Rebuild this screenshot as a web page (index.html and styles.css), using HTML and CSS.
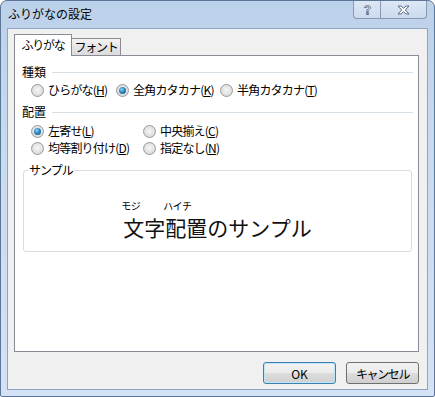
FILE: index.html
```html
<!DOCTYPE html>
<html lang="ja">
<head>
    <meta charset="UTF-8">
    <title>ふりがなの設定</title>
    <link rel="stylesheet" href="styles.css">
</head>
<body>

    <div class="window">
        <div class="titlebar">
            <span class="title">ふりがなの設定</span>
            <div class="caption">
                <span class="cap-btn help">
                    <svg width="9" height="12" viewBox="0 0 9 12">
                        <path d="M1.5 3.5 C1.5 1.2 7.5 1 7.5 3.6 C7.5 5.3 5.3 5.6 5.3 7.3 L3.7 7.3 C3.7 5.2 5.9 4.9 5.9 3.7 C5.9 2.4 3.2 2.5 3.2 3.7 Z" fill="#fff" stroke="#4f5f77" stroke-width="0.9"/>
                        <rect x="3.7" y="8.6" width="1.6" height="1.8" fill="#fff" stroke="#4f5f77" stroke-width="0.9"/>
                    </svg>
                </span>
                <span class="cap-btn close">
                    <svg width="13" height="10" viewBox="0 0 13 10">
                        <path d="M1 1 L4 1 L6.5 3.2 L9 1 L12 1 L8.3 5 L12 9 L9 9 L6.5 6.8 L4 9 L1 9 L4.7 5 Z" fill="#fff" stroke="#4f5f77" stroke-width="0.9" stroke-linejoin="round"/>
                    </svg>
                </span>
            </div>
        </div>

        <div class="client">
            <div class="tabs">
                <span class="tab active">ふりがな</span>
                <span class="tab">フォント</span>
            </div>

            <div class="panel">
                <div class="group-head">種類</div>
                <div class="options kind">
                    <label class="option"><span class="radio"></span>ひらがな(<u>H</u>)</label>
                    <label class="option"><span class="radio checked"></span>全角カタカナ(<u>K</u>)</label>
                    <label class="option"><span class="radio"></span>半角カタカナ(<u>T</u>)</label>
                </div>

                <div class="group-head">配置</div>
                <div class="options align">
                    <label class="option"><span class="radio checked"></span>左寄せ(<u>L</u>)</label>
                    <label class="option"><span class="radio"></span>中央揃え(<u>C</u>)</label>
                    <label class="option"><span class="radio"></span>均等割り付け(<u>D</u>)</label>
                    <label class="option"><span class="radio"></span>指定なし(<u>N</u>)</label>
                </div>

                <fieldset class="sample">
                    <legend>サンプル</legend>
                    <div class="sample-text">
                        <span class="word"><span class="rt">モジ</span><span class="rb">文字</span></span>
                        <span class="word"><span class="rt">ハイチ</span><span class="rb">配置</span></span>
                        <span class="word"><span class="rb">のサンプル</span></span>
                    </div>
                </fieldset>
            </div>

            <div class="buttons">
                <button class="default">OK</button>
                <button>キャンセル</button>
            </div>
        </div>
    </div>

</body>
</html>
```

FILE: styles.css
```css
body {
    margin: 0;
    font-family: "Noto Sans CJK JP", "Liberation Sans", sans-serif;
    font-size: 12px;
    color: #000;
    background: #fff;
}
.window {
    width: 435px;
    height: 397px;
    box-sizing: border-box;
    display: flex;
    flex-direction: column;
    padding: 0 6px 6px 6px;
    border: 1px solid #5d7596;
    border-radius: 7px 7px 2px 2px;
    background: linear-gradient(#bcd1ea, #c9dbf0 40%, #d3e2f4);
}
.titlebar {
    height: 27px;
    display: flex;
    justify-content: space-between;
    align-items: flex-start;
}
.title {
    margin: 5px 0 0 1px;
    font-size: 12px;
    line-height: 16px;
}
.caption {
    display: flex;
    margin-right: 1px;
}
.cap-btn {
    height: 18px;
    display: flex;
    align-items: center;
    justify-content: center;
    box-sizing: border-box;
    border: 1px solid #8799b3;
    border-top: none;
    background: linear-gradient(#dde8f5, #cbdaee);
}
.cap-btn.help {
    width: 28px;
    border-radius: 0 0 0 4px;
}
.cap-btn.close {
    width: 46px;
    border-left: none;
    border-radius: 0 0 4px 0;
}
.client {
    flex: 1;
    display: flex;
    flex-direction: column;
    padding: 5px 8px 5px 6px;
    background: #f0f0f0;
    border: 1px solid #8fa4c0;
}
.tabs {
    display: flex;
    align-items: flex-end;
    height: 21px;
}
.tab {
    box-sizing: border-box;
    width: 50px;
    height: 17px;
    line-height: 15px;
    text-align: center;
    letter-spacing: -1.2px;
    border: 1px solid #898c95;
    border-bottom: none;
    background: linear-gradient(#f3f3f3, #e5e5e5 50%, #dcdcdc);
    margin-left: -1px;
}
.tab.active {
    width: 58px;
    height: 22px;
    line-height: 20px;
    margin-left: 0;
    margin-bottom: -1px;
    background: #fff;
    position: relative;
    z-index: 1;
}
.panel {
    flex: 1;
    background: #fff;
    border: 1px solid #898c95;
    padding: 8px 5px 0 7px;
    display: flex;
    flex-direction: column;
}
.group-head {
    display: flex;
    align-items: center;
    line-height: 16px;
}
.group-head::after {
    content: "";
    flex: 1;
    margin-left: 6px;
    border-top: 1px solid #d5dfe5;
}
.options {
    display: grid;
    margin-left: 9px;
    line-height: 16px;
    letter-spacing: -0.8px;
}
.options.kind {
    grid-template-columns: 85px 104px auto;
    margin-top: 2px;
    margin-bottom: 6px;
}
.options.align {
    grid-template-columns: 112px auto;
    row-gap: 1px;
    margin-top: 3px;
}
.option {
    display: flex;
    align-items: center;
    white-space: nowrap;
}
.radio {
    flex: none;
    width: 13px;
    height: 13px;
    box-sizing: border-box;
    margin-right: 4px;
    border-radius: 50%;
    border: 1px solid #9a9a9a;
    background: radial-gradient(circle at 50% 45%, #f6f6f6 0, #e2e2e2 55%, #cdcdcd 100%);
    display: flex;
    align-items: center;
    justify-content: center;
}
.radio.checked::after {
    content: "";
    width: 7px;
    height: 7px;
    border-radius: 50%;
    background: radial-gradient(circle at 40% 35%, #8fd8f7 0, #2f86c3 45%, #0f4a7c 100%);
}
.sample {
    margin: 6px 1px 0 1px;
    padding: 0 4px;
    height: 90px;
    box-sizing: border-box;
    border: 1px solid #dcdcdc;
    border-radius: 3px;
}
.sample legend {
    padding: 0 1px;
    line-height: 16px;
    letter-spacing: -1px;
}
.sample-text {
    display: flex;
    justify-content: center;
    align-items: flex-end;
    margin-top: 20px;
}
.word {
    display: flex;
    flex-direction: column;
    align-items: flex-start;
}
.rt {
    font-size: 10px;
    line-height: 15px;
    margin-left: -2px;
    margin-bottom: -1px;
    letter-spacing: -0.5px;
}
.rb {
    font-size: 21px;
    line-height: 30px;
    color: #111;
}
.buttons {
    display: flex;
    justify-content: flex-end;
    gap: 10px;
    margin-top: 10px;
}
button {
    width: 73px;
    height: 22px;
    padding: 0;
    font-family: inherit;
    font-size: 12px;
    letter-spacing: -1.4px;
    color: #000;
    border: 1px solid #707070;
    border-radius: 3px;
    background: linear-gradient(#f2f2f2 0, #ebebeb 50%, #dddddd 50%, #cfcfcf 100%);
}
button.default {
    letter-spacing: 0;
    border-color: #3c7fb1;
    box-shadow: inset 0 0 0 1px #bfe6f8;
}
```
